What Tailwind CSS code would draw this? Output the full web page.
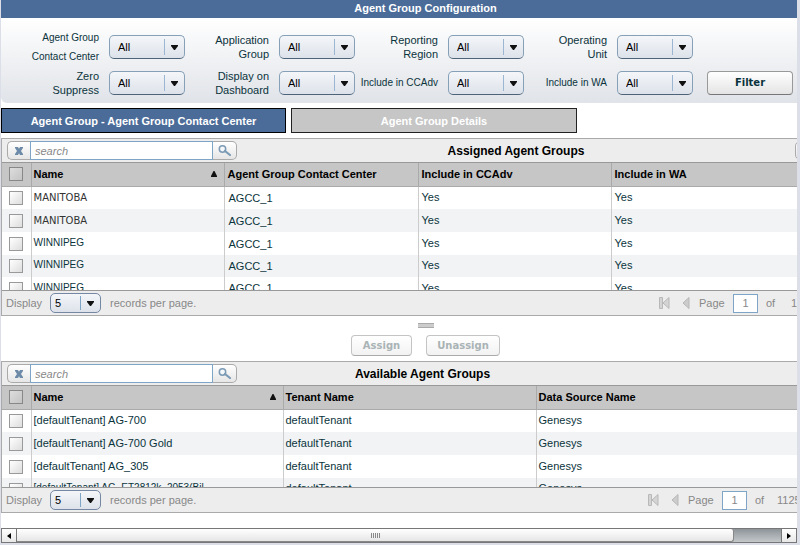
<!DOCTYPE html>
<html lang="en">
<head>
<meta charset="utf-8">
<meta name="viewport" content="width=device-width, initial-scale=1">
<title>Agent Group Configuration</title>
<script src="https://cdn.jsdelivr.net/npm/@tailwindcss/browser@4"></script>
</head>
<body class="bg-[#dcdee8] pl-px pr-[3px] pb-[2px] font-['Liberation_Sans',Arial,sans-serif] text-[11px] leading-[14px] text-[#0b333c]">
<svg class="hidden">
  <symbol id="down" viewBox="0 0 7 6"><path d="M0 0h7v1L4 5H3L0 1z" fill="#111"/></symbol>
  <symbol id="up" viewBox="0 0 6 6"><path d="M2.5 0h1L6 5v1H0V5z" fill="#111"/></symbol>
  <symbol id="cross" viewBox="0 0 8 8"><path d="M0 0h3l1 1.8L5 0h3v1L6 4l2 3v1H5L4 6.2 3 8H0V7l2-3-2-3z" fill="#6d8ba8"/></symbol>
  <symbol id="lens" viewBox="0 0 13 11"><circle cx="4.5" cy="4" r="3.2" fill="#f4f8fb" stroke="#7d9ab5" stroke-width="1.5"/><path d="M7 6l5 4" stroke="#7d9ab5" stroke-width="2.2" stroke-linecap="round"/></symbol>
  <symbol id="first" viewBox="0 0 11 12"><path d="M.5.5h3v11h-3zM10 .5v11L4 6z" fill="#d4d4d4" stroke="#b8b8b8"/></symbol>
  <symbol id="prev" viewBox="0 0 8 12"><path d="M7 .5v11L1 6z" fill="#ccc" stroke="#b8b8b8"/></symbol>
</svg>
<div class="bg-white">
<main class="overflow-hidden">
  <div class="min-w-[849px]">
    <h1 class="h-[18px] bg-[#4b6c99] pt-px text-center font-bold text-white">Agent Group Configuration</h1>

    <form class="flex h-[85px] items-start rounded-b-md bg-linear-to-b from-white to-[#e0e3e8] pl-[15px] pt-[17px]">
      <div class="grid grid-cols-[169px_170px_169px_169px] gap-y-3">
        <div class="flex h-6 items-center justify-end gap-[10px]">
          <label for="f1" class="text-right text-[10px] leading-[19px] whitespace-nowrap">Agent Group<br>Contact Center</label>
          <div class="relative"><select id="f1" class="block h-6 w-[76px] appearance-none rounded-[5px] border border-[#86a0b8] border-b-[#4d6478] bg-linear-to-b from-[#f4f6f9] to-[#dde2ea] pl-2 text-black"><option>All</option></select><span class="pointer-events-none absolute top-1 left-[55px] h-4 w-px bg-[#9ab6d2]"></span><svg class="pointer-events-none absolute top-[10px] left-[62px] h-[6px] w-[7px]"><use href="#down"/></svg></div>
        </div>
        <div class="flex h-6 items-center justify-end gap-[10px]">
          <label for="f2" class="text-right whitespace-nowrap">Application<br>Group</label>
          <div class="relative"><select id="f2" class="block h-6 w-[76px] appearance-none rounded-[5px] border border-[#86a0b8] border-b-[#4d6478] bg-linear-to-b from-[#f4f6f9] to-[#dde2ea] pl-2 text-black"><option>All</option></select><span class="pointer-events-none absolute top-1 left-[55px] h-4 w-px bg-[#9ab6d2]"></span><svg class="pointer-events-none absolute top-[10px] left-[62px] h-[6px] w-[7px]"><use href="#down"/></svg></div>
        </div>
        <div class="flex h-6 items-center justify-end gap-[10px]">
          <label for="f3" class="text-right whitespace-nowrap">Reporting<br>Region</label>
          <div class="relative"><select id="f3" class="block h-6 w-[76px] appearance-none rounded-[5px] border border-[#86a0b8] border-b-[#4d6478] bg-linear-to-b from-[#f4f6f9] to-[#dde2ea] pl-2 text-black"><option>All</option></select><span class="pointer-events-none absolute top-1 left-[55px] h-4 w-px bg-[#9ab6d2]"></span><svg class="pointer-events-none absolute top-[10px] left-[62px] h-[6px] w-[7px]"><use href="#down"/></svg></div>
        </div>
        <div class="flex h-6 items-center justify-end gap-[10px]">
          <label for="f4" class="text-right whitespace-nowrap">Operating<br>Unit</label>
          <div class="relative"><select id="f4" class="block h-6 w-[76px] appearance-none rounded-[5px] border border-[#86a0b8] border-b-[#4d6478] bg-linear-to-b from-[#f4f6f9] to-[#dde2ea] pl-2 text-black"><option>All</option></select><span class="pointer-events-none absolute top-1 left-[55px] h-4 w-px bg-[#9ab6d2]"></span><svg class="pointer-events-none absolute top-[10px] left-[62px] h-[6px] w-[7px]"><use href="#down"/></svg></div>
        </div>
        <div class="flex h-6 items-center justify-end gap-[10px]">
          <label for="f5" class="text-right whitespace-nowrap">Zero<br>Suppress</label>
          <div class="relative"><select id="f5" class="block h-6 w-[76px] appearance-none rounded-[5px] border border-[#86a0b8] border-b-[#4d6478] bg-linear-to-b from-[#f4f6f9] to-[#dde2ea] pl-2 text-black"><option>All</option></select><span class="pointer-events-none absolute top-1 left-[55px] h-4 w-px bg-[#9ab6d2]"></span><svg class="pointer-events-none absolute top-[10px] left-[62px] h-[6px] w-[7px]"><use href="#down"/></svg></div>
        </div>
        <div class="flex h-6 items-center justify-end gap-[10px]">
          <label for="f6" class="text-right whitespace-nowrap">Display on<br>Dashboard</label>
          <div class="relative"><select id="f6" class="block h-6 w-[76px] appearance-none rounded-[5px] border border-[#86a0b8] border-b-[#4d6478] bg-linear-to-b from-[#f4f6f9] to-[#dde2ea] pl-2 text-black"><option>All</option></select><span class="pointer-events-none absolute top-1 left-[55px] h-4 w-px bg-[#9ab6d2]"></span><svg class="pointer-events-none absolute top-[10px] left-[62px] h-[6px] w-[7px]"><use href="#down"/></svg></div>
        </div>
        <div class="flex h-6 items-center justify-end gap-[10px]">
          <label for="f7" class="text-right text-[10px] whitespace-nowrap">Include in CCAdv</label>
          <div class="relative"><select id="f7" class="block h-6 w-[76px] appearance-none rounded-[5px] border border-[#86a0b8] border-b-[#4d6478] bg-linear-to-b from-[#f4f6f9] to-[#dde2ea] pl-2 text-black"><option>All</option></select><span class="pointer-events-none absolute top-1 left-[55px] h-4 w-px bg-[#9ab6d2]"></span><svg class="pointer-events-none absolute top-[10px] left-[62px] h-[6px] w-[7px]"><use href="#down"/></svg></div>
        </div>
        <div class="flex h-6 items-center justify-end gap-[10px]">
          <label for="f8" class="text-right text-[10px] whitespace-nowrap">Include in WA</label>
          <div class="relative"><select id="f8" class="block h-6 w-[76px] appearance-none rounded-[5px] border border-[#86a0b8] border-b-[#4d6478] bg-linear-to-b from-[#f4f6f9] to-[#dde2ea] pl-2 text-black"><option>All</option></select><span class="pointer-events-none absolute top-1 left-[55px] h-4 w-px bg-[#9ab6d2]"></span><svg class="pointer-events-none absolute top-[10px] left-[62px] h-[6px] w-[7px]"><use href="#down"/></svg></div>
        </div>
      </div>
      <button type="button" class="mt-9 ml-[14px] h-6 w-[86px] rounded-[4px] border border-[#999] border-b-[#777] bg-linear-to-b from-white to-[#e4e4e4] font-['DejaVu_Sans',Verdana,sans-serif] text-[10px] font-bold">Filter</button>
    </form>

    <nav class="mt-[5px] flex gap-[5px] font-bold text-white">
      <button class="h-[25px] w-[285px] border border-black bg-[#4b6c99]">Agent Group - Agent Group Contact Center</button>
      <button class="h-[25px] w-[286px] border border-[#222] bg-[#c6c6c6]">Agent Group Details</button>
    </nav>

    <section class="mt-[5px] border border-[#aaa]">
      <div class="flex h-[23px] items-center bg-[#ededed] pl-[5px]">
        <div class="flex h-[19px]">
          <button aria-label="Clear search" class="flex w-[23px] items-center justify-center rounded-l-[5px] border border-r-0 border-[#aaa] bg-linear-to-b from-white to-[#e6e6e6]"><svg class="size-2"><use href="#cross"/></svg></button>
          <input aria-label="Search assigned agent groups" placeholder="search" class="w-[183px] border border-[#7ea4c6] bg-white px-1 italic placeholder:text-[#888]">
          <button aria-label="Search" class="flex w-[24px] items-center justify-center rounded-r-[5px] border border-l-0 border-[#aaa] bg-linear-to-b from-white to-[#e6e6e6]"><svg class="h-[11px] w-[13px]"><use href="#lens"/></svg></button>
        </div>
        <h2 class="flex-1 text-center text-[12px] font-bold text-black">Assigned Agent Groups</h2>
        <button aria-label="Options" class="h-[19px] w-[54px] rounded-l-[5px] border border-[#aaa] bg-linear-to-b from-white to-[#e6e6e6]"></button>
      </div>
      <div class="h-[129px] overflow-hidden border-y border-[#999]">
        <table class="w-full table-fixed border-collapse">
          <colgroup><col class="w-[29px]"><col class="w-[193px]"><col class="w-[194px]"><col class="w-[193px]"><col></colgroup>
          <thead><tr class="h-[23px] border-b border-[#aaa] bg-[#c6c6c6] text-left text-black">
            <th class="pl-[7px]"><input type="checkbox" aria-label="Select all assigned" class="block size-[14px] appearance-none border border-[#888] bg-linear-to-br from-[#ddd] to-[#c4c4c4]"></th>
            <th class="border-l border-[#aaa] pl-[2px]"><div class="flex items-center justify-between pr-[7px]">Name<svg class="h-[6px] w-[6px]"><use href="#up"/></svg></div></th>
            <th class="border-l border-[#aaa] pl-[3px]">Agent Group Contact Center</th>
            <th class="border-l border-[#aaa] pl-[3px]">Include in CCAdv</th>
            <th class="border-l border-[#aaa] pl-[3px]">Include in WA</th>
          </tr></thead>
          <tbody>
            <tr class="h-[23px] even:bg-[#f1f3f5]"><td class="pl-[7px]"><input type="checkbox" aria-label="Select row 1" class="block size-[14px] appearance-none border border-[#999] bg-linear-to-br from-white to-[#ddd]"></td><td class="border-l border-[#ccc] pl-[2px] font-['DejaVu_Sans',Tahoma,sans-serif] text-[10px] text-[#333]">MANITOBA</td><td class="border-l border-[#ccc] pl-1">AGCC_1</td><td class="border-l border-[#ccc] pb-[2px] pl-[3px]">Yes</td><td class="border-l border-[#ccc] pb-[2px] pl-[3px]">Yes</td></tr>
            <tr class="h-[23px] even:bg-[#f1f3f5]"><td class="pl-[7px]"><input type="checkbox" aria-label="Select row 2" class="block size-[14px] appearance-none border border-[#999] bg-linear-to-br from-white to-[#ddd]"></td><td class="border-l border-[#ccc] pl-[2px] font-['DejaVu_Sans',Tahoma,sans-serif] text-[10px] text-[#333]">MANITOBA</td><td class="border-l border-[#ccc] pl-1">AGCC_1</td><td class="border-l border-[#ccc] pb-[2px] pl-[3px]">Yes</td><td class="border-l border-[#ccc] pb-[2px] pl-[3px]">Yes</td></tr>
            <tr class="h-[23px] even:bg-[#f1f3f5]"><td class="pl-[7px]"><input type="checkbox" aria-label="Select row 3" class="block size-[14px] appearance-none border border-[#999] bg-linear-to-br from-white to-[#ddd]"></td><td class="border-l border-[#ccc] pb-[2px] pl-[2px] text-[10px]">WINNIPEG</td><td class="border-l border-[#ccc] pl-1">AGCC_1</td><td class="border-l border-[#ccc] pb-[2px] pl-[3px]">Yes</td><td class="border-l border-[#ccc] pb-[2px] pl-[3px]">Yes</td></tr>
            <tr class="h-[22px] even:bg-[#f1f3f5]"><td class="pl-[7px]"><input type="checkbox" aria-label="Select row 4" class="block size-[14px] appearance-none border border-[#999] bg-linear-to-br from-white to-[#ddd]"></td><td class="border-l border-[#ccc] pb-[2px] pl-[2px] text-[10px]">WINNIPEG</td><td class="border-l border-[#ccc] pl-1">AGCC_1</td><td class="border-l border-[#ccc] pb-[2px] pl-[3px]">Yes</td><td class="border-l border-[#ccc] pb-[2px] pl-[3px]">Yes</td></tr>
            <tr class="h-[23px] even:bg-[#f1f3f5]"><td class="pl-[7px]"><input type="checkbox" aria-label="Select row 5" class="block size-[14px] appearance-none border border-[#999] bg-linear-to-br from-white to-[#ddd]"></td><td class="border-l border-[#ccc] pb-[2px] pl-[2px] text-[10px]">WINNIPEG</td><td class="border-l border-[#ccc] pb-[2px] pl-1">AGCC_1</td><td class="border-l border-[#ccc] pb-[2px] pl-[3px]">Yes</td><td class="border-l border-[#ccc] pb-[2px] pl-[3px]">Yes</td></tr>
          </tbody>
        </table>
      </div>
      <div class="flex h-[24px] items-center bg-[#ededed] pl-1 text-[#888]">
        <label for="n1" class="w-[44px]">Display</label>
        <div class="relative"><select id="n1" class="block h-5 w-[51px] appearance-none rounded-[5px] border border-[#7488a4] bg-linear-to-b from-[#f4f6f9] to-[#dde2ea] pl-1 text-black"><option>5</option></select><span class="pointer-events-none absolute top-[3px] left-[30px] h-[14px] w-px bg-[#7ea4c6]"></span><svg class="pointer-events-none absolute top-2 left-[37px] h-[6px] w-[7px]"><use href="#down"/></svg></div>
        <span class="ml-[9px]">records per page.</span>
        <div class="ml-auto flex w-[190px] items-center">
          <button aria-label="First page"><svg class="h-3 w-[11px]"><use href="#first"/></svg></button>
          <button aria-label="Previous page" class="ml-3"><svg class="h-3 w-2"><use href="#prev"/></svg></button>
          <label for="p1" class="ml-[9px] w-[34px]">Page</label>
          <input id="p1" value="1" class="h-[19px] w-[25px] border border-[#7ea4c6] bg-white text-center">
          <span class="ml-2 w-[25px]">of</span><span>1</span>
        </div>
      </div>
    </section>

    <div class="flex h-[45px] flex-col items-center pt-[7px]">
      <div class="h-[5px] w-4 border-y border-[#aaa] bg-[#ccc]"></div>
      <div class="mt-[7px] flex gap-[14px] font-['DejaVu_Sans',Verdana,sans-serif] text-[10px] font-bold">
        <button disabled class="h-[21px] w-[61px] rounded-[4px] border border-[#c4c4c4] border-b-[#aaa] bg-linear-to-b from-white to-[#f2f2f2] text-[#a9b3b5]">Assign</button>
        <button disabled class="h-[21px] w-[74px] rounded-[4px] border border-[#c4c4c4] border-b-[#aaa] bg-linear-to-b from-white to-[#f2f2f2] text-[#a9b3b5]">Unassign</button>
      </div>
    </div>

    <section class="border border-[#aaa]">
      <div class="grid h-[23px] grid-cols-[1fr_auto_1fr] items-center bg-[#ededed] pr-[3px] pl-[5px]">
        <div class="flex h-[19px]">
          <button aria-label="Clear search" class="flex w-[23px] items-center justify-center rounded-l-[5px] border border-r-0 border-[#aaa] bg-linear-to-b from-white to-[#e6e6e6]"><svg class="size-2"><use href="#cross"/></svg></button>
          <input aria-label="Search available agent groups" placeholder="search" class="w-[183px] border border-[#7ea4c6] bg-white px-1 italic placeholder:text-[#888]">
          <button aria-label="Search" class="flex w-[24px] items-center justify-center rounded-r-[5px] border border-l-0 border-[#aaa] bg-linear-to-b from-white to-[#e6e6e6]"><svg class="h-[11px] w-[13px]"><use href="#lens"/></svg></button>
        </div>
        <h2 class="pr-2 text-[12px] font-bold text-black">Available Agent Groups</h2>
      </div>
      <div class="h-[103px] overflow-hidden border-y border-[#999]">
        <table class="w-full table-fixed border-collapse">
          <colgroup><col class="w-[29px]"><col class="w-[252px]"><col class="w-[253px]"><col></colgroup>
          <thead><tr class="h-[23px] border-b border-[#aaa] bg-[#c6c6c6] text-left text-black">
            <th class="pl-[7px]"><input type="checkbox" aria-label="Select all available" class="block size-[14px] appearance-none border border-[#888] bg-linear-to-br from-[#ddd] to-[#c4c4c4]"></th>
            <th class="border-l border-[#aaa] pl-[2px]"><div class="flex items-center justify-between pr-[7px]">Name<svg class="h-[6px] w-[6px]"><use href="#up"/></svg></div></th>
            <th class="border-l border-[#aaa] pl-[2px]">Tenant Name</th>
            <th class="border-l border-[#aaa] pl-[2px]">Data Source Name</th>
          </tr></thead>
          <tbody>
            <tr class="h-[23px] even:bg-[#f1f3f5]"><td class="pl-[7px]"><input type="checkbox" aria-label="Select AG-700" class="block size-[14px] appearance-none border border-[#999] bg-linear-to-br from-white to-[#ddd]"></td><td class="border-l border-[#ccc] pb-[2px] pl-[2px]">[defaultTenant] AG-700</td><td class="border-l border-[#ccc] pb-[2px] pl-[2px]">defaultTenant</td><td class="border-l border-[#ccc] pb-[2px] pl-[2px]">Genesys</td></tr>
            <tr class="h-[23px] even:bg-[#f1f3f5]"><td class="pl-[7px]"><input type="checkbox" aria-label="Select AG-700 Gold" class="block size-[14px] appearance-none border border-[#999] bg-linear-to-br from-white to-[#ddd]"></td><td class="border-l border-[#ccc] pb-[2px] pl-[2px]">[defaultTenant] AG-700 Gold</td><td class="border-l border-[#ccc] pb-[2px] pl-[2px]">defaultTenant</td><td class="border-l border-[#ccc] pb-[2px] pl-[2px]">Genesys</td></tr>
            <tr class="h-[23px] even:bg-[#f1f3f5]"><td class="pl-[7px]"><input type="checkbox" aria-label="Select AG_305" class="block size-[14px] appearance-none border border-[#999] bg-linear-to-br from-white to-[#ddd]"></td><td class="border-l border-[#ccc] pb-[2px] pl-[2px]">[defaultTenant] AG_305</td><td class="border-l border-[#ccc] pb-[2px] pl-[2px]">defaultTenant</td><td class="border-l border-[#ccc] pb-[2px] pl-[2px]">Genesys</td></tr>
            <tr class="h-[23px] even:bg-[#f1f3f5]"><td class="pl-[7px]"><input type="checkbox" aria-label="Select row 4 available" class="block size-[14px] appearance-none border border-[#999] bg-linear-to-br from-white to-[#ddd]"></td><td class="border-l border-[#ccc] pb-[4px] pl-[2px] text-[10px]">[defaultTenant] AG_ET2812k_2053(Bil</td><td class="border-l border-[#ccc] pb-[4px] pl-[2px]">defaultTenant</td><td class="border-l border-[#ccc] pb-[4px] pl-[2px]">Genesys</td></tr>
          </tbody>
        </table>
      </div>
      <div class="flex h-[24px] items-center bg-[#ededed] pl-1 text-[#888]">
        <label for="n2" class="w-[44px]">Display</label>
        <div class="relative"><select id="n2" class="block h-5 w-[51px] appearance-none rounded-[5px] border border-[#7488a4] bg-linear-to-b from-[#f4f6f9] to-[#dde2ea] pl-1 text-black"><option>5</option></select><span class="pointer-events-none absolute top-[3px] left-[30px] h-[14px] w-px bg-[#7ea4c6]"></span><svg class="pointer-events-none absolute top-2 left-[37px] h-[6px] w-[7px]"><use href="#down"/></svg></div>
        <span class="ml-[9px]">records per page.</span>
        <div class="ml-auto flex w-[201px] items-center">
          <button aria-label="First page"><svg class="h-3 w-[11px]"><use href="#first"/></svg></button>
          <button aria-label="Previous page" class="ml-3"><svg class="h-3 w-2"><use href="#prev"/></svg></button>
          <label for="p2" class="ml-[9px] w-[34px]">Page</label>
          <input id="p2" value="1" class="h-[19px] w-[25px] border border-[#7ea4c6] bg-white text-center">
          <span class="ml-2 w-[22px]">of</span><span>1125</span>
        </div>
      </div>
    </section>
  </div>
</main>

<div class="mt-[15px] flex h-[15px] border border-[#777] bg-linear-to-b from-[#8e9599] to-[#c4c8cb]">
  <button aria-label="Scroll left" class="flex w-[15px] items-center justify-center border-r border-[#777] bg-linear-to-b from-white to-[#e8e8e8]"><svg class="h-[6px] w-1" viewBox="0 0 4 6"><path d="M4 0v6L0 3z"/></svg></button>
  <div class="flex w-[717px] shrink items-center justify-center gap-px rounded-r-[3px] border-r border-b border-[#888] bg-linear-to-b from-white to-[#e6e6e6]">
    <i class="h-[5px] w-px bg-[#888]"></i><i class="h-[5px] w-px bg-[#888]"></i><i class="h-[5px] w-px bg-[#888]"></i><i class="h-[5px] w-px bg-[#888]"></i><i class="h-[5px] w-px bg-[#888]"></i>
  </div>
  <button aria-label="Scroll right" class="ml-auto flex w-[15px] items-center justify-center border-l border-[#777] bg-linear-to-b from-white to-[#e8e8e8]"><svg class="h-[6px] w-1" viewBox="0 0 4 6"><path d="M0 0v6l4-3z"/></svg></button>
</div>
</div>
</body>
</html>
